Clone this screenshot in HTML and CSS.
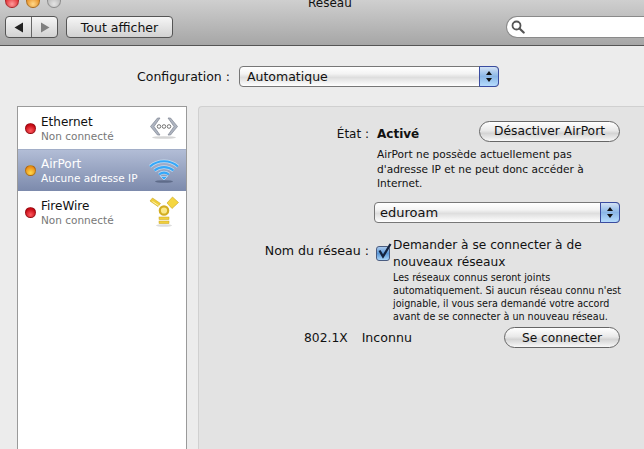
FILE: index.html
```html
<!DOCTYPE html>
<html lang="fr">
<head>
<meta charset="utf-8">
<title>Réseau</title>
<link rel="stylesheet" href="styles.css">
</head>
<body>
<div class="window">
  <header class="toolbar">
    <div class="lights">
      <span class="light red"></span>
      <span class="light orange"></span>
      <span class="light grey"></span>
    </div>
    <div class="title">Réseau</div>
    <div class="tools">
      <div class="navs">
        <span class="nav nav-back"><svg width="10" height="11" viewBox="0 0 10 11"><path d="M9 0.5v10L0.5 5.5z" fill="#222"/></svg></span>
        <span class="nav"><svg width="10" height="11" viewBox="0 0 10 11"><path d="M1 0.5v10l8.5-5z" fill="#808080"/></svg></span>
      </div>
      <button class="tool-btn">Tout afficher</button>
      <div class="search">
        <svg width="14" height="14" viewBox="0 0 14 14"><circle cx="5.5" cy="5.5" r="4" fill="none" stroke="#555" stroke-width="1.8"/><path d="M8.5 8.5l4.2 4" stroke="#555" stroke-width="2.2" stroke-linecap="round"/></svg>
      </div>
    </div>
  </header>

  <div class="config">
    <span class="config-label">Configuration :</span>
    <div class="select select-config">
      <span class="select-text">Automatique</span>
      <span class="stepper"><i class="up"></i><i class="down"></i></span>
    </div>
  </div>

  <main class="content">
    <aside class="sidebar">
      <div class="item">
        <span class="dot dot-red"></span>
        <div class="item-text"><div class="item-name">Ethernet</div><div class="item-sub">Non connecté</div></div>
        <svg class="item-icon" width="30" height="26" viewBox="0 0 30 26">
          <ellipse cx="15" cy="22.500" rx="12" ry="1.300" fill="#d4d4d4"/>
          <path d="M8.500 3L1.500 11.500l7 8.500h2.500l-6-8.500 6-8.500z" fill="#aeb4c0" stroke="#7e8592" stroke-width="0.700"/>
          <path d="M21.500 3l7 8.500-7 8.500H19l6-8.500-6-8.500z" fill="#aeb4c0" stroke="#7e8592" stroke-width="0.700"/>
          <circle cx="10" cy="11.500" r="1.800" fill="#fff" stroke="#666" stroke-width="0.900"/>
          <circle cx="15" cy="11.500" r="1.800" fill="#fff" stroke="#666" stroke-width="0.900"/>
          <circle cx="20" cy="11.500" r="1.800" fill="#fff" stroke="#666" stroke-width="0.900"/>
        </svg>
      </div>
      <div class="item item-active">
        <span class="dot dot-orange"></span>
        <div class="item-text"><div class="item-name">AirPort</div><div class="item-sub">Aucune adresse IP</div></div>
        <svg class="item-icon" width="30" height="26" viewBox="0 0 30 26">
          <ellipse cx="15" cy="23.500" rx="9" ry="1.300" fill="#5f6c8a"/>
          <g fill="none" stroke="#d5effd" stroke-width="3.600" opacity="0.700">
            <path d="M1 8.500C9 1.500 21 1.500 29 8.500"/>
            <path d="M5.500 12.500C11 8 19 8 24.500 12.500"/>
            <path d="M10 16.500C13 14.200 17 14.200 20 16.500"/>
          </g>
          <g fill="none" stroke="#35a8fa" stroke-width="2.200">
            <path d="M1 8.500C9 1.500 21 1.500 29 8.500"/>
            <path d="M5.500 12.500C11 8 19 8 24.500 12.500"/>
            <path d="M10 16.500C13 14.200 17 14.200 20 16.500"/>
          </g>
          <path d="M11.500 18.500h7l-3.500 3.500z" fill="#35a8fa" stroke="#d5effd" stroke-width="0.600"/>
        </svg>
      </div>
      <div class="item">
        <span class="dot dot-red"></span>
        <div class="item-text"><div class="item-name">FireWire</div><div class="item-sub">Non connecté</div></div>
        <svg class="item-icon" width="30" height="32" viewBox="0 0 30 32">
          <ellipse cx="15" cy="29.500" rx="8" ry="1.300" fill="#ddd"/>
          <path d="M1 5l2.500-3 8 5.500-2.500 3z" fill="#f0cf3c" stroke="#c9a520" stroke-width="0.600"/>
          <path d="M3.500 5.500l6 4" stroke="#fff3a8" stroke-width="1"/>
          <path d="M23.500 1L29.500 6.500 23 12.500 18 7z" fill="#f5d640" stroke="#c9a520" stroke-width="0.600"/>
          <circle cx="15" cy="14.500" r="4.200" fill="#fbe88a" stroke="#d2ad22" stroke-width="2.200"/>
          <rect x="10" y="21" width="10" height="2.600" fill="#f0cf3c" stroke="#c9a520" stroke-width="0.500"/>
          <rect x="10" y="25" width="10" height="2.600" fill="#f0cf3c" stroke="#c9a520" stroke-width="0.500"/>
        </svg>
      </div>
    </aside>

    <section class="panel">
      <div class="row row-state">
        <span class="label">État :</span>
        <strong class="state">Activé</strong>
        <button class="pill pill-wide">Désactiver AirPort</button>
      </div>
      <p class="status-text">AirPort ne possède actuellement pas d'adresse IP et ne peut donc accéder à Internet.</p>
      <div class="select select-net">
        <span class="select-text select-text-net">eduroam</span>
        <span class="stepper"><i class="up"></i><i class="down"></i></span>
      </div>
      <div class="row row-net">
        <span class="label">Nom du réseau :</span>
        <span class="check"><svg width="16" height="17" viewBox="0 0 16 17"><path d="M3.500 7.500l3.500 6L14.500 1" fill="none" stroke="#14233f" stroke-width="2.300"/></svg></span>
        <div class="ask">
          <div class="ask-title">Demander à se connecter à de nouveaux réseaux</div>
          <p class="ask-note">Les réseaux connus seront joints automatiquement. Si aucun réseau connu n'est joignable, il vous sera demandé votre accord avant de se connecter à un nouveau réseau.</p>
        </div>
      </div>
      <div class="row row-8021x">
        <span class="x-label">802.1X</span>
        <span class="x-value">Inconnu</span>
        <button class="pill pill-connect">Se connecter</button>
      </div>
    </section>
  </main>
</div>
</body>
</html>
```

FILE: styles.css
```css
* { box-sizing: border-box; }
html, body { margin: 0; height: 100%; overflow: hidden; }
body { font-family: "DejaVu Sans", sans-serif; font-size: 12px; color: #111; background: #ececec; }
button { font-family: inherit; color: #111; padding: 0; margin: 0; }
p { margin: 0; }

.window { display: flex; flex-direction: column; height: 449px; width: 644px; }

.toolbar { position: relative; height: 46px; flex: none; background: linear-gradient(#cfcfcf, #a6a6a6); border-bottom: 1px solid #555; }
.lights { position: absolute; left: 5px; top: -6px; display: flex; gap: 7px; }
.light { width: 14px; height: 14px; border-radius: 50%; border: 1px solid rgba(0,0,0,.25); }
.red { background: radial-gradient(circle at 50% 75%, #ff9c9c, #e0272c 70%); }
.orange { background: radial-gradient(circle at 50% 75%, #ffd98a, #e58a1d 70%); }
.grey { background: radial-gradient(circle at 50% 75%, #e4e4e4, #b8b8b8 70%); }
.title { position: absolute; left: 308px; top: -5px; font-size: 12px; line-height: 16px; }
.tools { display: flex; align-items: center; padding: 16px 0 0 5px; }
.navs { display: flex; width: 53px; height: 22px; border: 1px solid #555; border-radius: 4px; background: linear-gradient(#f6f6f6, #d2d2d2); }
.nav { flex: 1; display: flex; align-items: center; justify-content: center; }
.nav-back { border-right: 1px solid #666; flex: 0 0 26px; }
.tool-btn { margin-left: 8px; width: 107px; height: 22px; border: 1px solid #555; border-radius: 4px; background: linear-gradient(#f6f6f6, #d2d2d2); font-size: 12.500px; }
.search { margin-left: auto; width: 140px; height: 22px; margin-right: -2px; padding: 3px 0 0 4px; background: #fff; border: 1px solid #8a8a8a; border-right: 0; border-radius: 11px 0 0 11px; }
.search svg { display: block; }

.config { display: flex; align-items: center; height: 60px; flex: none; padding-left: 137px; }
.config-label { font-size: 12.500px; width: 102px; }
.select { display: flex; align-items: center; justify-content: space-between; height: 21px; border: 1px solid #777; border-radius: 4px; background: linear-gradient(#fff 0%, #f4f4f4 35%, #dedede 55%, #fff 100%); font-size: 12.500px; }
.select-text { padding-left: 7px; }
.select-text-net { padding-left: 5px; font-size: 13px; }
.select-config { width: 260px; }
.stepper { width: 20px; height: 21px; margin: -1px -1px -1px 0; display: flex; flex-direction: column; align-items: center; justify-content: center; gap: 3px; border: 1px solid #3a4ca0; border-radius: 0 4px 4px 0; background: linear-gradient(#d3e2f5, #8ab6e6 50%, #b6dcfd); }
.stepper i { width: 0; height: 0; border-left: 3px solid transparent; border-right: 3px solid transparent; }
.up { border-bottom: 4px solid #111; }
.down { border-top: 4px solid #111; }

.content { display: flex; flex: 1; min-height: 0; padding-left: 17px; }
.sidebar { width: 170px; flex: none; background: #fff; border: 1px solid #9a9a9a; border-bottom: 0; }
.item { display: flex; align-items: center; height: 42px; padding-left: 7px; position: relative; }
.item-active { background: linear-gradient(#b2bdd6, #7c8aac); color: #fff; border-top: 1px solid #a2aec8; }
.dot { width: 11px; height: 11px; border-radius: 50%; flex: none; border: 1px solid rgba(0,0,0,.25); }
.dot-red { background: radial-gradient(circle at 50% 75%, #ff5a5f, #c70a14 70%); }
.dot-orange { background: radial-gradient(circle at 50% 75%, #ffd94a, #ea8a14 75%); }
.item-text { margin-left: 5px; flex: 1; padding-top: 2px; }
.item-name { font-size: 12px; line-height: 14px; }
.item-sub { font-size: 10.500px; line-height: 15px; color: #777; }
.item-active .item-sub { color: #fff; }
.item-icon { flex: none; margin-right: 7px; }

.panel { flex: 1; margin-left: 11px; background: #e3e3e3; border-top: 1px solid #d0d0d0; border-left: 1px solid #d0d0d0; border-radius: 4px 0 0 0; padding-top: 15px; min-width: 0; }
.row { display: flex; }
.label { width: 170px; text-align: right; font-size: 12px; flex: none; }
.row-state { align-items: center; height: 24px; }
.state { margin-left: 8px; font-size: 12px; }
.pill { height: 21px; border: 1px solid #666; border-radius: 11px; background: linear-gradient(#fff, #e9e9e9 45%, #d4d4d4 60%, #f8f8f8); font-size: 12.500px; }
.pill-wide { width: 141px; margin-left: auto; margin-right: 24px; margin-top: -6px; font-size: 12.300px; }
.status-text { margin: 1px 0 0 178px; width: 230px; font-size: 10.600px; line-height: 14.500px; }
.select-net { width: 246px; margin: 11px 0 0 175px; }
.row-net { margin-top: 20px; }
.row-net .label { font-size: 12.600px; }
.check { width: 14px; height: 15px; margin: 3px 0 0 7px; flex: none; border: 1px solid #4a5c80; border-radius: 3px; background: linear-gradient(#a9c9ec, #5b98d8 50%, #a8d4f8); position: relative; }
.check svg { position: absolute; left: -1px; top: -4px; }
.ask { margin: -6px 0 0 3px; width: 240px; }
.ask-title { font-size: 12.200px; line-height: 17px; width: 200px; }
.ask-note { font-size: 9.600px; line-height: 13px; }
.row-8021x { align-items: center; margin-top: 3px; height: 24px; }
.x-label { margin-left: 105px; font-size: 12.300px; }
.x-value { margin-left: 14px; font-size: 12.600px; }
.pill-connect { width: 116px; margin-left: auto; margin-right: 24px; font-size: 12.200px; }
```
